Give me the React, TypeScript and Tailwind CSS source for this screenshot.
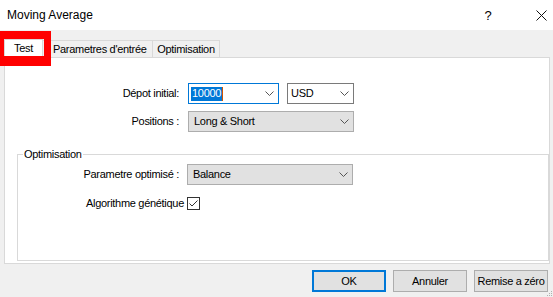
import React from "react";

const Chevron = () => (
  <svg width="9" height="5" viewBox="0 0 9 5" className="shrink-0">
    <polyline points="0.5,0.5 4.5,4.5 8.5,0.5" fill="none" stroke="#555" strokeWidth="1" />
  </svg>
);

function Combo({ w, variant, children }: { w: string; variant: "focus" | "edit" | "list"; children: React.ReactNode }) {
  const cls =
    variant === "focus"
      ? "bg-white border-[#0078d7] pl-[2px]"
      : variant === "edit"
      ? "bg-white border-[#7a7a7a] pl-[3px]"
      : "bg-[#e1e1e1] border-[#adadad] pl-[5px]";
  return (
    <div className={`${w} h-[21px] border ${cls} flex items-center justify-between pr-[4px]`}>
      <div className="flex items-center">{children}</div>
      <Chevron />
    </div>
  );
}

function Button({ children, primary }: { children: React.ReactNode; primary?: boolean }) {
  return (
    <div
      className={`w-[74px] h-[22px] bg-[#e1e1e1] flex items-center justify-center ${
        primary ? "border-2 border-[#0078d7]" : "border border-[#adadad]"
      }`}
    >
      {children}
    </div>
  );
}

export default function App() {
  return (
    <div className="relative w-[553px] h-[297px] overflow-hidden bg-[#f0f0f0] text-black font-['Liberation_Sans',Arial,sans-serif] text-[11px] tracking-[-0.3px] leading-[13px]">
      {/* Title bar */}
      <div className="h-[30px] bg-white flex items-center justify-between">
        <div className="pl-[7px] text-[12px] tracking-normal pt-[1px]">Moving Average</div>
        <div className="flex items-center h-full">
          <div className="w-[20px] mr-[31px] h-full flex items-center justify-center text-[13px] tracking-normal">?</div>
          <div className="w-[24px] h-full flex items-center justify-center">
            <svg width="11" height="11" viewBox="0 0 11 11">
              <path d="M0.5 0.5 L10.5 10.5 M10.5 0.5 L0.5 10.5" stroke="#111" strokeWidth="1" />
            </svg>
          </div>
        </div>
      </div>

      {/* Tabs */}
      <div className="mt-[9px] h-[18px] pl-[4px] flex items-end">
        <div className="relative z-10 w-[39px] h-[19px] -mb-[1px] bg-white border border-b-0 border-[#d9d9d9] flex items-center justify-center pb-[2px]">
          Test
        </div>
        <div className="w-[110px] h-[17px] border border-l-0 border-b-0 border-[#d9d9d9] flex items-center pl-[10px]">
          Parametres d'entrée
        </div>
        <div className="w-[67px] h-[17px] border border-l-0 border-b-0 border-[#d9d9d9] flex items-center justify-center">
          Optimisation
        </div>
      </div>

      {/* Panel */}
      <div className="ml-[4px] w-[546px] h-[207px] bg-white border border-[#d9d9d9] flex flex-col">
        <div className="pt-[25px] flex items-center">
          <div className="w-[175px] text-right pr-[1px]">Dépot initial:</div>
          <div className="ml-[8px] flex gap-[8px]">
            <Combo w="w-[91px]" variant="focus">
              <span className="bg-[#0078d7] text-white px-[1px] h-[14px] flex items-center">10000</span>
              <span className="w-[1px] h-[14px] bg-[#d35400]" />
            </Combo>
            <Combo w="w-[67px]" variant="edit">
              USD
            </Combo>
          </div>
        </div>
        <div className="mt-[7px] flex items-center">
          <div className="w-[175px] text-right pr-[1px]">Positions :</div>
          <div className="ml-[8px]">
            <Combo w="w-[166px]" variant="list">
              Long &amp; Short
            </Combo>
          </div>
        </div>

        <fieldset className="mt-[16px] ml-[12px] h-[113px] border border-r border-[#d9d9d9]">
          <legend className="ml-[5px] px-[1px] leading-[13px]">Optimisation</legend>
          <div className="mt-[3px] flex items-center">
            <div className="w-[162px] text-right pr-[1px]">Parametre optimisé :</div>
            <div className="ml-[7px]">
              <Combo w="w-[166px]" variant="list">
                Balance
              </Combo>
            </div>
          </div>
          <div className="mt-[12px] flex items-center h-[13px] pl-[68px]">
            <span>Algorithme génétique</span>
            <div className="ml-[3px] w-[13px] h-[13px] border border-[#333] bg-white flex items-center justify-center">
              <svg width="11" height="11" viewBox="0 0 11 11">
                <polyline points="1.5,5.5 4,8 9.5,2.5" fill="none" stroke="#333" strokeWidth="1" />
              </svg>
            </div>
          </div>
        </fieldset>
      </div>

      {/* Buttons */}
      <div className="mt-[6px] pr-[5px] flex justify-end gap-[7px]">
        <Button primary>OK</Button>
        <Button>Annuler</Button>
        <Button>Remise a zéro</Button>
      </div>

      {/* Red highlight overlay */}
      <div className="absolute left-0 top-[31px] w-[51px] h-[35px] border-t-[8px] border-l-[4px] border-r-[7px] border-b-[10px] border-[#ff0000] pointer-events-none z-20" />

      {/* Size grip */}
      <svg className="absolute right-0 bottom-0" width="8" height="8" viewBox="0 0 8 8">
        <rect x="6" y="2" width="1" height="1" fill="#b0b0b0" />
        <rect x="4" y="4" width="1" height="1" fill="#b0b0b0" />
        <rect x="6" y="4" width="1" height="1" fill="#b0b0b0" />
        <rect x="2" y="6" width="1" height="1" fill="#b0b0b0" />
        <rect x="4" y="6" width="1" height="1" fill="#b0b0b0" />
        <rect x="6" y="6" width="1" height="1" fill="#b0b0b0" />
      </svg>
    </div>
  );
}
